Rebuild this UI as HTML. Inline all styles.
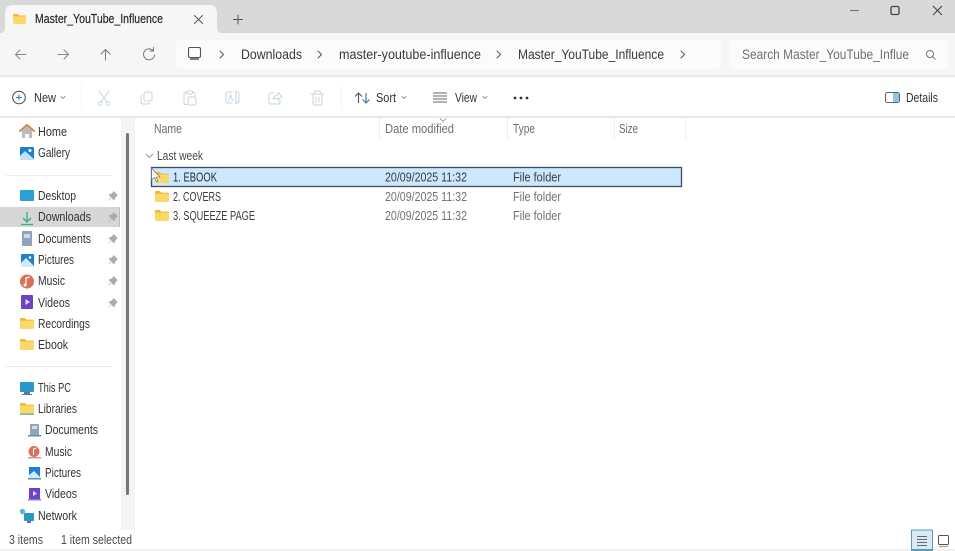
<!DOCTYPE html>
<html><head><meta charset="utf-8"><title>Master_YouTube_Influence</title>
<style>
html,body{margin:0;padding:0;width:955px;height:551px;overflow:hidden;background:#fff}
svg{display:block;filter:blur(.35px)}
text{font-family:"Liberation Sans",sans-serif;font-size:12.5px;fill:#333}
.nav text{font-size:13.5px;fill:#3a3a3a}
.side text{font-size:12.5px;fill:#333}
.gray text{fill:#6e6e6e}
.ic{fill:none;stroke:#555;stroke-width:1;stroke-linecap:round;stroke-linejoin:round}
.dis{fill:none;stroke:#c4d6e0;stroke-width:1;stroke-linecap:round;stroke-linejoin:round}
</style></head><body>
<svg width="955" height="551" viewBox="0 0 955 551" xmlns="http://www.w3.org/2000/svg">
<defs>
<symbol id="folder" viewBox="0 0 14 11" overflow="visible">
<path d="M0 1.2Q0 0 1.2 0H4.8L6.4 1.6H12.8Q14 1.6 14 2.8V3H0Z" fill="#eeb733"/>
<path d="M0 2.600H14V9.800Q14 11 12.800 11H1.200Q0 11 0 9.800Z" fill="#fbd968"/>
</symbol>
<symbol id="pin" viewBox="0 0 10 10" overflow="visible">
<path d="M5.6 .4L9.4 4.2L8.4 4.8L6.9 6.700L6.600 8.300L5.800 8.800L1.200 4.200L1.700 3.400L3.300 3.100L5.200 1.500Z M2.900 6.900L.6 9.300" fill="#ababab" stroke="#ababab" stroke-width=".6"/>
</symbol>
</defs>
<!-- Title bar -->
<rect width="955" height="33" fill="#d9d9d9"/>
<path d="M0 33Q5 33 5 28V13Q5 5 13 5H209Q217 5 217 13V28Q217 33 222 33Z" fill="#f7f7f7"/>
<use href="#folder" x="13" y="14" width="13" height="10"/>
<text x="35" y="23" textLength="128" lengthAdjust="spacingAndGlyphs" style="font-size:12.5px;fill:#2a2a2a;stroke:#2a2a2a;stroke-width:.2">Master_YouTube_Influence</text>
<path class="ic" d="M194.500 15.500L202.500 23.500M202.500 15.500L194.500 23.500"/>
<path class="ic" d="M233.500 19.500H242.500M238 15V24"/>
<path d="M850 10.500H859" stroke="#777" stroke-width="1.200"/>
<rect x="891" y="6.500" width="8" height="8" rx="1.500" fill="none" stroke="#444" stroke-width="1.300"/>
<path d="M933 6L942 15M942 6L933 15" stroke="#444" stroke-width="1.100" fill="none"/>

<!-- Nav bar -->
<rect y="33" width="955" height="42" fill="#f6f6f6"/>
<rect y="75" width="955" height="2" fill="#e6e6e6"/>
<rect x="176" y="40" width="545" height="29" rx="4" fill="#fbfbfb"/>
<rect x="729" y="40" width="219" height="29" rx="4" fill="#fbfbfb"/>
<path class="ic" style="stroke:#888" d="M26 54.500H16M20 50L15.500 54.500L20 59"/>
<path class="ic" style="stroke:#888" d="M58 54.500H68M64 50L68.500 54.500L64 59"/>
<path class="ic" style="stroke:#777" d="M105.500 60V49.500M101 54L105.500 49.500L110 54"/>
<path class="ic" style="stroke:#777" d="M153 50.500A5.500 5.500 0 1 0 154.500 55M153.500 47.500V51H150"/>
<rect x="188.500" y="47.500" width="12" height="10" rx="1.500" fill="none" stroke="#555" stroke-width="1.100"/>
<path d="M190 59H199" stroke="#555" stroke-width="1.500"/>
<g class="ic"><path d="M220 51L223.500 54.500L220 58"/><path d="M318 51L321.500 54.500L318 58"/><path d="M497 51L500.500 54.500L497 58"/><path d="M681 51L684.500 54.500L681 58"/></g>
<g class="nav">
<text x="241" y="59" textLength="61" lengthAdjust="spacingAndGlyphs">Downloads</text>
<text x="339" y="59" textLength="142" lengthAdjust="spacingAndGlyphs">master-youtube-influence</text>
<text x="518" y="59" textLength="146" lengthAdjust="spacingAndGlyphs">Master_YouTube_Influence</text>
<text x="742" y="59" textLength="167" lengthAdjust="spacingAndGlyphs" style="fill:#707070">Search Master_YouTube_Influe</text>
</g>
<circle cx="930" cy="54" r="3.500" fill="none" stroke="#777" stroke-width="1"/>
<path d="M932.500 56.500L935.500 59.500" stroke="#777" stroke-width="1"/>

<!-- Toolbar -->
<rect y="77" width="955" height="39" fill="#fff"/>
<rect y="116" width="955" height="2" fill="#e8e8e8"/>
<circle cx="19" cy="97.500" r="6.300" fill="none" stroke="#444" stroke-width="1"/>
<path d="M19 94.500V100.500M16 97.500H22" stroke="#2a7ab8" stroke-width="1"/>
<text x="34" y="102" textLength="22" lengthAdjust="spacingAndGlyphs">New</text>
<path class="ic" style="stroke:#999" d="M61 96.500L63 98.500L65 96.500"/>
<rect x="81" y="84" width="1" height="27" fill="#f6f6f6"/>
<g class="dis">
<path d="M99 91L107 102M109 91L101 102"/><circle cx="100" cy="103.500" r="1.800"/><circle cx="108" cy="103.500" r="1.800"/>
<rect x="144" y="92" width="8" height="9" rx="2"/><path d="M142 95.500Q141 96 141 97.500V101.500Q141 104 143.500 104H148Q149 104 149.500 103"/>
<path d="M186 92.500H185Q184 92.500 184 94V103Q184 104.500 185 104.500H187M193 92.500H194Q195 92.500 195 94V96"/><rect x="186.500" y="91" width="6" height="3" rx="1"/><rect x="188" y="97" width="8" height="8" rx="1.500"/>
<path d="M232 92H228Q226 92 226 94V101Q226 103 228 103H232M236 91V104M236 92H237.500Q239 92 239 94V101Q239 103 237.500 103H236M228.500 100.500L230.500 94.500L232.500 100.500"/>
<path d="M274 93H271Q269 93 269 95V102Q269 104 271 104H278Q280 104 280 102V100M273 99Q274 95 278 95V92.500L282 96.500L278 100V98Q275 98 273 99Z"/>
<path d="M311 94H324M314.500 94V92.500Q314.500 91 316 91H319Q320.500 91 320.500 92.500V94M313 94V103Q313 105 315 105H320Q322 105 322 103V94M316 97V102M319 97V102"/>
</g>
<rect x="341" y="84" width="1" height="27" fill="#f6f6f6"/>
<path d="M358.500 103V93M355 96.500L358.500 93L362 96.500" fill="none" stroke="#555" stroke-width="1.100"/>
<path d="M366 93V103M362.500 99.500L366 103L369.500 99.500" fill="none" stroke="#2a7ab8" stroke-width="1.100"/>
<text x="376" y="102" textLength="20" lengthAdjust="spacingAndGlyphs">Sort</text>
<path class="ic" style="stroke:#999" d="M402 96.500L404 98.500L406 96.500"/>
<path d="M433 93H447M433 96H447M433 99H447M433 102H447" stroke="#666" stroke-width="1"/>
<text x="455" y="102" textLength="22" lengthAdjust="spacingAndGlyphs">View</text>
<path class="ic" style="stroke:#999" d="M483 96.500L485 98.500L487 96.500"/>
<circle cx="515" cy="98" r="1.400" fill="#333"/><circle cx="521" cy="98" r="1.400" fill="#333"/><circle cx="527" cy="98" r="1.400" fill="#333"/>
<rect x="885.500" y="92.500" width="14" height="10" rx="2" fill="none" stroke="#666" stroke-width="1.100"/>
<rect x="893" y="93" width="6" height="9" fill="#8cc4e8"/>
<text x="906" y="102" textLength="32" lengthAdjust="spacingAndGlyphs">Details</text>

<!-- Sidebar scroll region -->
<rect x="121" y="118" width="14" height="412" fill="#f4f4f4"/>
<rect x="126" y="133" width="3" height="362" rx="1.500" fill="#777"/>
<rect x="0" y="207" width="120" height="20" fill="#d6d6d6"/>
<rect x="119" y="207" width="1" height="20" fill="#bbb"/>
<rect x="6" y="175" width="107" height="1" fill="#ececec"/>
<rect x="6" y="366" width="107" height="1" fill="#ececec"/>

<!-- Sidebar icons -->
<path d="M20 131L27 125L34 131" fill="none" stroke="#d8854a" stroke-width="2" stroke-linecap="round"/>
<path d="M22 130.500L27 126.500L32 130.500V138H29V134H25V138H22Z" fill="#b9bcbf"/>
<rect x="20" y="147" width="14" height="13" rx="1" fill="#1c7fd0"/>
<path d="M20 160V156L25 151L34 159V160Z" fill="#bfe3f8"/>
<circle cx="30" cy="150.500" r="1.500" fill="#fff"/>
<rect x="20" y="190" width="14" height="11" rx="1" fill="#2a9fd8"/>
<path d="M27 212V222M23 218L27 222L31 218" fill="none" stroke="#35ab8a" stroke-width="1.300"/>
<path d="M21 224.500H33" stroke="#35ab8a" stroke-width="1.300"/>
<rect x="22" y="231" width="10" height="15" rx="1" fill="#8fa4bc"/>
<rect x="24" y="234" width="6" height="4" fill="#d1dae4"/>
<rect x="21" y="254" width="13" height="13" rx="1" fill="#1c7fd0"/>
<path d="M21 267V263L26 258L34 266V267Z" fill="#cfeafa"/>
<circle cx="30" cy="257.500" r="1.300" fill="#fff"/>
<circle cx="27" cy="281.500" r="7" fill="#d9705c"/>
<path d="M26 285V278L29.500 277" fill="none" stroke="#fff" stroke-width="1.200"/><circle cx="25" cy="285" r="1.500" fill="#fff"/>
<rect x="21" y="295" width="12" height="14" rx="1" fill="#6f42c8"/>
<path d="M25.500 299V305L30 302Z" fill="#e6d8ff"/>
<use href="#folder" x="20" y="318" width="14" height="11"/>
<use href="#folder" x="20" y="339" width="14" height="11"/>
<rect x="20" y="382" width="14" height="10" rx="1" fill="#2899c8"/>
<rect x="24" y="392" width="6" height="2" fill="#5b7a8c"/><rect x="22" y="394" width="10" height="1" fill="#5b7a8c"/>
<use href="#folder" x="20" y="403" width="14" height="11"/>
<rect x="20" y="413.500" width="14" height="1.500" fill="#7fb59a"/>
<rect x="30" y="424" width="9" height="11" fill="#93a6bc"/><rect x="28" y="435" width="13" height="1.500" fill="#5f90b0"/>
<rect x="32" y="426" width="5" height="3" fill="#d5dee8"/>
<circle cx="34" cy="451.500" r="5.500" fill="#d9705c"/>
<path d="M33.500 455V449L36.500 448" fill="none" stroke="#fff" stroke-width="1"/>
<rect x="28" y="457" width="13" height="1.500" fill="#b9a0a0"/>
<rect x="29" y="467" width="11" height="11" fill="#1c7fd0"/>
<path d="M29 478V475L34 471L40 477V478Z" fill="#cfeafa"/>
<rect x="28" y="478" width="13" height="1.500" fill="#5f90b0"/>
<rect x="29" y="488" width="11" height="11" fill="#6f42c8"/>
<path d="M33 491V496L37 493.500Z" fill="#e6d8ff"/>
<rect x="28" y="499" width="13" height="1.500" fill="#7f7fd0"/>
<rect x="24" y="513" width="10" height="8" rx="1" fill="#2a98c8"/>
<circle cx="22.500" cy="511.500" r="2.700" fill="#58b4dc"/>
<rect x="27" y="521" width="4" height="2" fill="#5b7a8c"/>

<!-- Pins -->
<g>
<use href="#pin" x="108" y="191" width="10" height="10"/>
<use href="#pin" x="108" y="212" width="10" height="10"/>
<use href="#pin" x="108" y="234" width="10" height="10"/>
<use href="#pin" x="108" y="255" width="10" height="10"/>
<use href="#pin" x="108" y="276" width="10" height="10"/>
<use href="#pin" x="108" y="298" width="10" height="10"/>
</g>

<g class="side">
<text x="38" y="136" textLength="29" lengthAdjust="spacingAndGlyphs">Home</text>
<text x="38" y="157" textLength="32" lengthAdjust="spacingAndGlyphs">Gallery</text>
<text x="38" y="200" textLength="38" lengthAdjust="spacingAndGlyphs">Desktop</text>
<text x="38" y="221" textLength="53" lengthAdjust="spacingAndGlyphs">Downloads</text>
<text x="38" y="243" textLength="53" lengthAdjust="spacingAndGlyphs">Documents</text>
<text x="38" y="264" textLength="36" lengthAdjust="spacingAndGlyphs">Pictures</text>
<text x="38" y="285" textLength="27" lengthAdjust="spacingAndGlyphs">Music</text>
<text x="38" y="307" textLength="32" lengthAdjust="spacingAndGlyphs">Videos</text>
<text x="38" y="328" textLength="52" lengthAdjust="spacingAndGlyphs">Recordings</text>
<text x="38" y="349" textLength="30" lengthAdjust="spacingAndGlyphs">Ebook</text>
<text x="38" y="392" textLength="33" lengthAdjust="spacingAndGlyphs">This PC</text>
<text x="38" y="413" textLength="39" lengthAdjust="spacingAndGlyphs">Libraries</text>
<text x="45" y="434" textLength="53" lengthAdjust="spacingAndGlyphs">Documents</text>
<text x="45" y="456" textLength="27" lengthAdjust="spacingAndGlyphs">Music</text>
<text x="45" y="477" textLength="36" lengthAdjust="spacingAndGlyphs">Pictures</text>
<text x="45" y="498" textLength="32" lengthAdjust="spacingAndGlyphs">Videos</text>
<text x="38" y="520" textLength="39" lengthAdjust="spacingAndGlyphs">Network</text>
</g>

<!-- Column headers -->
<rect x="379" y="118" width="1" height="22" fill="#efefef"/>
<rect x="507" y="118" width="1" height="22" fill="#efefef"/>
<rect x="614" y="118" width="1" height="22" fill="#efefef"/>
<rect x="685" y="118" width="1" height="22" fill="#efefef"/>
<path d="M440 118.500L443 121.500L446 118.500" fill="none" stroke="#999" stroke-width=".9"/>
<g class="gray">
<text x="154" y="133" textLength="28" lengthAdjust="spacingAndGlyphs">Name</text>
<text x="385" y="133" textLength="69" lengthAdjust="spacingAndGlyphs">Date modified</text>
<text x="513" y="133" textLength="22" lengthAdjust="spacingAndGlyphs">Type</text>
<text x="619" y="133" textLength="19" lengthAdjust="spacingAndGlyphs">Size</text>
</g>
<path d="M146 154L149.500 157.500L153 154" fill="none" stroke="#999" stroke-width="1"/>
<text x="157" y="160" textLength="46" lengthAdjust="spacingAndGlyphs" style="fill:#4c4c4c">Last week</text>

<!-- Rows -->
<rect x="151.500" y="167.500" width="530" height="19" fill="#cce8ff" stroke="#3e4c5c" stroke-width="1.300"/>
<use href="#folder" x="155" y="172" width="14" height="11"/>
<use href="#folder" x="155" y="191" width="14" height="11"/>
<use href="#folder" x="155" y="210" width="14" height="11"/>
<text x="173" y="181.500" textLength="44" lengthAdjust="spacingAndGlyphs" style="fill:#2c2c2c">1. EBOOK</text>
<text x="173" y="201" textLength="48" lengthAdjust="spacingAndGlyphs" style="fill:#3c3c3c">2. COVERS</text>
<text x="173" y="220" textLength="82" lengthAdjust="spacingAndGlyphs" style="fill:#3c3c3c">3. SQUEEZE PAGE</text>
<text x="385" y="181.500" textLength="82" lengthAdjust="spacingAndGlyphs" style="fill:#3c3c3c">20/09/2025 11:32</text>
<text x="385" y="201" textLength="82" lengthAdjust="spacingAndGlyphs" style="fill:#727272">20/09/2025 11:32</text>
<text x="385" y="220" textLength="82" lengthAdjust="spacingAndGlyphs" style="fill:#727272">20/09/2025 11:32</text>
<text x="513" y="181.500" textLength="48" lengthAdjust="spacingAndGlyphs" style="fill:#3c3c3c">File folder</text>
<text x="513" y="201" textLength="48" lengthAdjust="spacingAndGlyphs" style="fill:#727272">File folder</text>
<text x="513" y="220" textLength="48" lengthAdjust="spacingAndGlyphs" style="fill:#727272">File folder</text>
<!-- Cursor -->
<path d="M151.500 168V180L154.500 177.500L156.500 182L158 181.300L156 177H160Z" fill="#fff" fill-opacity=".85" stroke="#666" stroke-width=".6"/>

<!-- Status bar -->
<text x="9" y="544" textLength="34" lengthAdjust="spacingAndGlyphs" style="fill:#4c4c4c">3 items</text>
<text x="61" y="544" textLength="71" lengthAdjust="spacingAndGlyphs" style="fill:#4c4c4c">1 item selected</text>
<rect x="911.500" y="530" width="21" height="21" fill="#d8ebf5" stroke="#5b9ab8" stroke-width="1"/>
<path d="M917 536.500H927M917 539.500H927M917 542.500H927M917 545.500H927" stroke="#667" stroke-width="1"/>
<rect x="938.500" y="535.500" width="10" height="9" rx="1" fill="none" stroke="#555" stroke-width="1"/>
<path d="M939 546.500H948" stroke="#aaa" stroke-width="1.500"/>
<rect y="549" width="955" height="2" fill="#f0f0f0"/>
<rect x="911" y="549" width="22" height="2" fill="#5b9ab8"/>
</svg>
</body></html>
